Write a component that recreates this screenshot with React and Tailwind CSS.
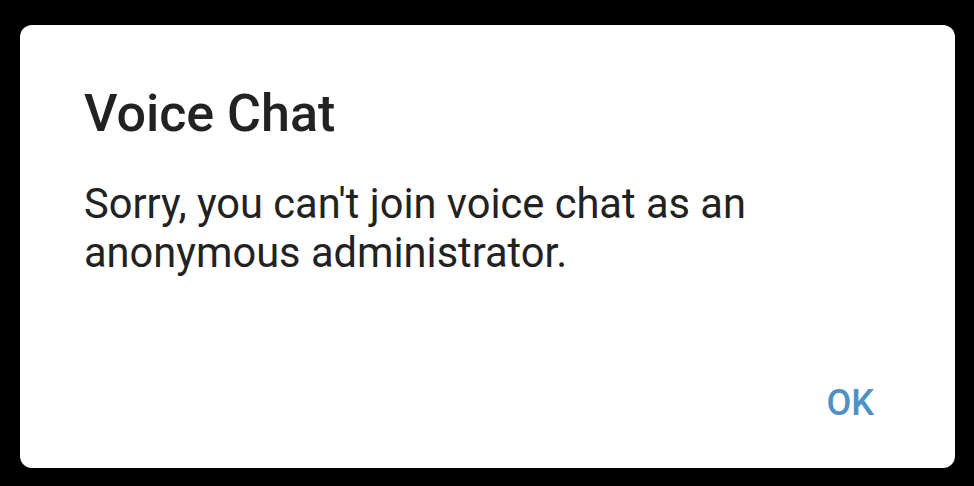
export default function App() {
  return (
    <div className="w-[974px] h-[486px] bg-black pt-[25px] pl-[20px] pr-[19px] pb-[18px] flex">
      <div
        className="flex-1 bg-white rounded-[12px] flex flex-col pl-[64px] pr-[81px] pt-[63px]"
        style={{ fontFamily: "Roboto, 'Liberation Sans', sans-serif" }}
      >
        <h1 className="text-[52px] leading-[52px] font-medium text-[#222222]">Voice Chat</h1>
        <p className="mt-[39px] text-[41.6px] leading-[49px] text-[#222222]">
          Sorry, you can't join voice chat as an
          <br />
          anonymous administrator.
        </p>
        <div className="flex justify-end mt-[108px]">
          <button className="text-[36px] leading-[36px] font-medium text-[#4d91c7]">OK</button>
        </div>
      </div>
    </div>
  )
}
